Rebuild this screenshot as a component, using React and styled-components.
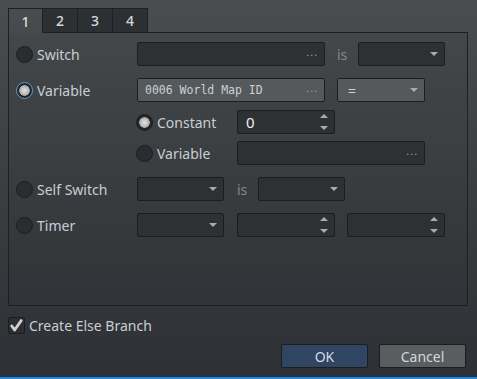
import React from 'react';
import styled, { createGlobalStyle, css } from 'styled-components';

const Global = createGlobalStyle`
  html, body { margin: 0; padding: 0; background: #2e3135; }
  * { box-sizing: border-box; }
`;

function Radio({ checked, focus, label }) {
  return (
    <RadioWrap>
      <RadioDot $checked={checked} $focus={focus} />
      <Label>{label}</Label>
    </RadioWrap>
  );
}

function Arrow({ up }) {
  return <Tri $up={up} />;
}

export default function App() {
  return (
    <Window>
      <Global />
      <TabBar>
        <Tab $active>1</Tab>
        <Tab>2</Tab>
        <Tab>3</Tab>
        <Tab>4</Tab>
        <TabFill />
      </TabBar>
      <Panel>
        <Row>
          <Cell $w={121}><Radio label="Switch" /></Cell>
          <Field $w={188}><span /><Dots>...</Dots></Field>
          <Is $l={12} $r={11}>is</Is>
          <Field $w={87}><span /><Arrow /></Field>
        </Row>
        <Row>
          <Cell $w={121}><Radio checked focus label="Variable" /></Cell>
          <Field $w={188} $active><Mono>0006 World Map ID</Mono><Dots>...</Dots></Field>
          <Field $w={88} $active $ml={12}><Eq>=</Eq><Arrow /></Field>
        </Row>
        <Row $indent $space={8}>
          <Cell $w={101}><Radio checked label="Constant" /></Cell>
          <Field $w={98}>
            <Value>0</Value>
            <Spin><Arrow up /><Arrow /></Spin>
          </Field>
        </Row>
        <Row $indent $space={7}>
          <Cell $w={101}><Radio label="Variable" /></Cell>
          <Field $w={188}><span /><Dots>...</Dots></Field>
        </Row>
        <Row>
          <Cell $w={121}><Radio label="Self Switch" /></Cell>
          <Field $w={87}><span /><Arrow /></Field>
          <Is $l={13} $r={11}>is</Is>
          <Field $w={87}><span /><Arrow /></Field>
        </Row>
        <Row>
          <Cell $w={121}><Radio label="Timer" /></Cell>
          <Field $w={87}><span /><Arrow /></Field>
          <Field $w={98} $ml={13}><span /><Spin><Arrow up /><Arrow /></Spin></Field>
          <Field $w={98} $ml={12}><span /><Spin><Arrow up /><Arrow /></Spin></Field>
        </Row>
      </Panel>
      <CheckRow>
        <CheckBox>
          <svg width="13" height="13" viewBox="0 0 13 13">
            <path d="M1.8 7 L4.6 11 L11.2 1.6" fill="none" stroke="#cfcfcf" strokeWidth="2.8" strokeLinecap="round" strokeLinejoin="round" />
          </svg>
        </CheckBox>
        <Label>Create Else Branch</Label>
      </CheckRow>
      <Buttons>
        <Button $primary>OK</Button>
        <Button>Cancel</Button>
      </Buttons>
    </Window>
  );
}

const font = `"Noto Sans", "Open Sans", sans-serif`;

const Window = styled.div`
  width: 477px;
  height: 379px;
  display: flex;
  flex-direction: column;
  padding: 8px 9px 0 8px;
  background: linear-gradient(to bottom, #4a4d50 0%, #3b3e41 50%, #2d3034 100%);
  border-bottom: 2px solid #1f88e0;
  font-family: ${font};
  font-size: 14px;
  color: #c8ced4;
`;

const TabBar = styled.div`
  display: flex;
  height: 25px;
`;

const Tab = styled.div`
  width: 35px;
  height: 25px;
  display: flex;
  align-items: center;
  justify-content: center;
  border: 1px solid #1d1f22;
  border-left: none;
  color: #d4d8dc;
  font-size: 14px;
  font-weight: 500;
  background: #2d3033;
  ${p => p.$active && css`
    border-left: 1px solid #1d1f22;
    border-bottom: none;
    background: transparent;
    color: #dadcde;
  `}
`;

const TabFill = styled.div`
  flex: 1;
  border-bottom: 1px solid #1d1f22;
`;

const Panel = styled.div`
  height: 273px;
  border: 1px solid #1d1f22;
  border-top: none;
  padding: 9px 0 0 7px;
  display: flex;
  flex-direction: column;
  background: rgba(0, 0, 0, 0.03);
`;

const Row = styled.div`
  display: flex;
  align-items: center;
  height: 24px;
  margin-top: ${p => (p.$space ?? 12)}px;
  padding-left: ${p => (p.$indent ? 120 : 0)}px;
  &:first-child { margin-top: 0; }
`;

const Cell = styled.div`
  width: ${p => p.$w}px;
  flex: none;
`;

const RadioWrap = styled.div`
  display: flex;
  align-items: center;
  gap: 4px;
`;

const RadioDot = styled.span`
  width: 17px;
  height: 17px;
  border-radius: 50%;
  flex: none;
  background: #2a2d30;
  border: 1px solid #1c1e20;
  ${p => p.$checked && css`
    background: radial-gradient(circle, #e2e2e2 0, #c4c4c4 3px, #a9a9a9 5px, #222426 5.6px, #25282a 100%);
  `}
  ${p => p.$focus && css`
    border: 1px solid #5b9bd8;
  `}
`;

const Label = styled.span`
  font-size: 14px;
  color: #c8ced4;
  white-space: nowrap;
`;

const Field = styled.div`
  width: ${p => p.$w}px;
  height: 24px;
  flex: none;
  margin-left: ${p => p.$ml || 0}px;
  display: flex;
  align-items: center;
  justify-content: space-between;
  padding: 0 6px 0 7px;
  border: 1px solid #1b1d1f;
  border-radius: 2px;
  background: ${p => (p.$active ? '#56595c' : '#2e3134')};
`;

const Dots = styled.span`
  color: #9a9ea2;
  font-family: "DejaVu Sans", sans-serif;
  font-size: 11px;
  letter-spacing: 0.5px;
  line-height: 1;
  padding-bottom: 4px;
`;

const Mono = styled.span`
  font-family: "DejaVu Sans Mono", "Liberation Mono", monospace;
  font-size: 11.5px;
  color: #c9d0d6;
`;

const Eq = styled.span`
  color: #d0d4d8;
  font-size: 14px;
  padding-left: 3px;
`;

const Value = styled.span`
  color: #eceef0;
  font-size: 15px;
  padding-left: 1px;
`;

const Is = styled.span`
  margin: 0 ${p => p.$r}px 0 ${p => p.$l}px;
  color: #83878b;
  font-size: 14px;
`;

const Tri = styled.span`
  width: 0;
  height: 0;
  border-left: 4px solid transparent;
  border-right: 4px solid transparent;
  ${p => (p.$up
    ? css`border-bottom: 4px solid #a7abaf;`
    : css`border-top: 4px solid #a7abaf;`)}
`;

const Spin = styled.span`
  display: flex;
  flex-direction: column;
  justify-content: space-between;
  height: 16px;
`;

const CheckRow = styled.div`
  display: flex;
  align-items: center;
  gap: 4px;
  margin-top: 11px;
  height: 17px;
`;

const CheckBox = styled.span`
  width: 17px;
  height: 17px;
  flex: none;
  display: flex;
  align-items: center;
  justify-content: center;
  background: #2c2f32;
  border: 1px solid #1b1d1f;
  border-radius: 2px;
`;

const Buttons = styled.div`
  display: flex;
  justify-content: flex-end;
  gap: 11px;
  margin-top: 10px;
  padding-right: 2px;
`;

const Button = styled.button`
  width: 87px;
  height: 24px;
  font-family: ${font};
  font-size: 14px;
  border: 1px solid #1b1d1f;
  border-radius: 2px;
  color: ${p => (p.$primary ? '#d2dae2' : '#d4d7da')};
  background: ${p => (p.$primary ? '#2f4562' : '#5a5d60')};
  padding: 0;
`;
